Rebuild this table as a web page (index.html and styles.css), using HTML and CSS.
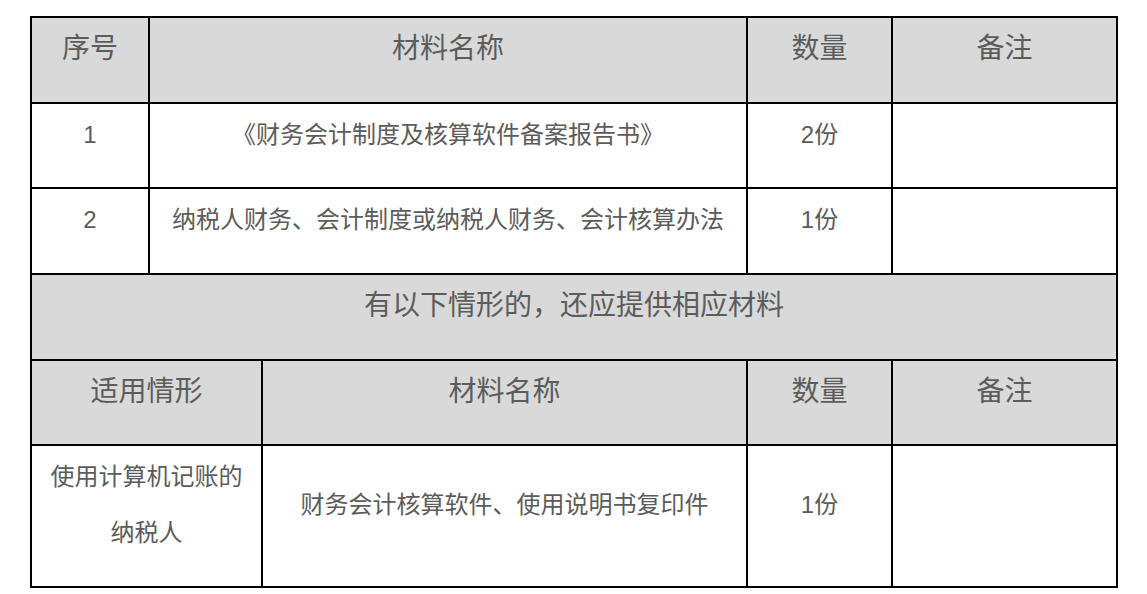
FILE: index.html
```html
<!DOCTYPE html>
<html lang="zh-CN">
<head>
<meta charset="utf-8">
<title>材料清单</title>
<link rel="stylesheet" href="styles.css">
</head>
<body>
<table class="materials">
  <colgroup>
    <col class="c1"><col class="c2"><col class="c3"><col class="c4"><col class="c5">
  </colgroup>
  <tr class="head">
    <td>序号</td>
    <td colspan="2">材料名称</td>
    <td>数量</td>
    <td>备注</td>
  </tr>
  <tr>
    <td>1</td>
    <td colspan="2">《财务会计制度及核算软件备案报告书》</td>
    <td>2份</td>
    <td></td>
  </tr>
  <tr>
    <td>2</td>
    <td colspan="2">纳税人财务、会计制度或纳税人财务、会计核算办法</td>
    <td>1份</td>
    <td></td>
  </tr>
  <tr class="head">
    <td colspan="5">有以下情形的，还应提供相应材料</td>
  </tr>
  <tr class="head">
    <td colspan="2">适用情形</td>
    <td>材料名称</td>
    <td>数量</td>
    <td>备注</td>
  </tr>
  <tr>
    <td colspan="2">使用计算机记账的<br>纳税人</td>
    <td>财务会计核算软件、使用说明书复印件</td>
    <td>1份</td>
    <td></td>
  </tr>
</table>
</body>
</html>
```

FILE: styles.css
```css
html, body {
  background: #ffffff;
}
body {
  margin: 16px 0 0 30px;
  font-family: "Liberation Sans", "Noto Sans CJK SC", sans-serif;
  color: #5c5c5c;
}
.materials {
  border-collapse: collapse;
  table-layout: fixed;
  width: 1086px;
}
.c1 { width: 118px; }
.c2 { width: 113px; }
.c3 { width: 485px; }
.c4 { width: 145px; }
.c5 { width: 225px; }
.materials td {
  border: 2px solid #000000;
  padding: 3px 4px 24.7px;
  line-height: 56px;
  font-size: 24px;
  text-align: center;
  vertical-align: middle;
  background: #ffffff;
}
.materials tr.head td {
  background: #d9d9d9;
  font-size: 28px;
}
```
